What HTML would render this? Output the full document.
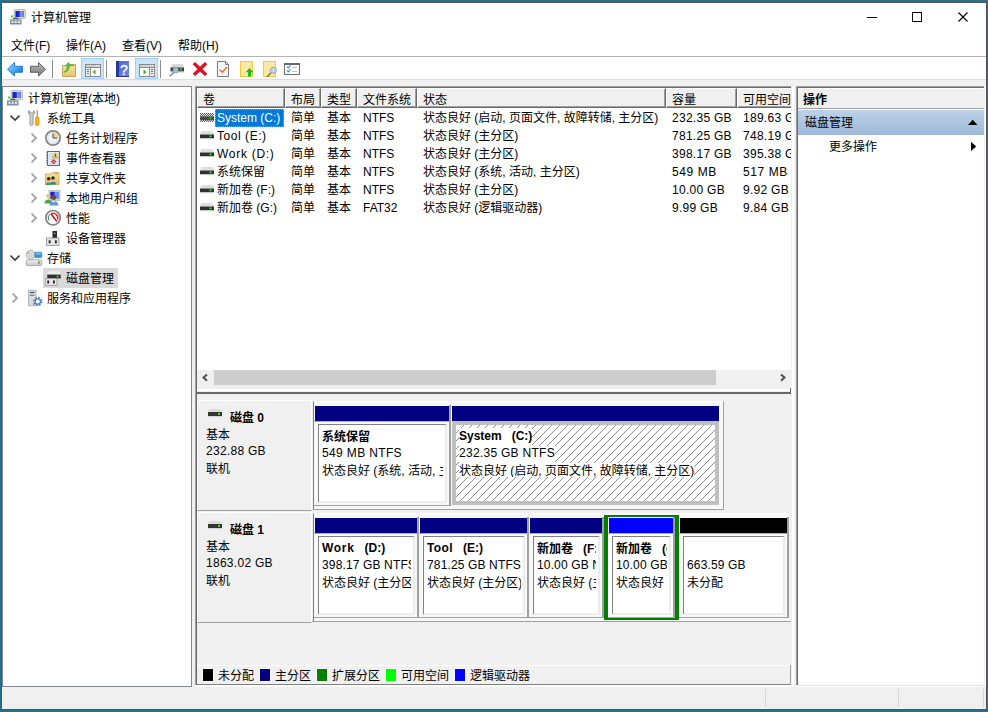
<!DOCTYPE html>
<html lang="zh-CN">
<head>
<meta charset="utf-8">
<title>计算机管理</title>
<style>
*{box-sizing:border-box;margin:0;padding:0}
html,body{width:988px;height:712px;overflow:hidden}
body{position:relative;background:#26708c;font-family:"Liberation Sans","Noto Sans CJK SC",sans-serif;font-size:12px;color:#000;line-height:16px}
.a{position:absolute}
.t{position:absolute;white-space:nowrap;height:16px;line-height:16px}
.b{font-weight:bold}
#frame{left:1px;top:2px;width:986px;height:708px;background:#50555a}
#win{left:2px;top:3px;width:984px;height:706px;background:#f0f0f0}
#top{left:2px;top:3px;width:984px;height:76px;background:#fff}
#tbline{left:2px;top:56px;width:984px;height:1px;background:#b4b4b4}
/* panes */
#left{left:2px;top:86px;width:190px;height:601px;background:#fff;border:1px solid #828790}
#mid{left:195px;top:86px;width:599px;height:601px;background:#f0f0f0;border-left:1px solid #a0a0a0;border-top:1px solid #a0a0a0}
#midin{left:196px;top:87px;width:597px;height:599px;border-left:1px solid #696969;border-top:1px solid #696969;background:#f0f0f0}
#right{left:796px;top:86px;width:190px;height:601px;background:#fff;border-left:1px solid #a0a0a0;border-top:1px solid #a0a0a0}
#rightin{left:797px;top:87px;width:189px;height:600px;background:#fff;border-left:1px solid #696969;border-top:1px solid #696969}
#status{left:2px;top:687px;width:984px;height:22px;background:#f0f0f0}
.hd{background:#f0f0f0;border-top:1px solid #fff;border-left:1px solid #fff;border-right:1px solid #696969;border-bottom:1px solid #696969;box-shadow:inset -1px -1px 0 #a0a0a0}
.l{letter-spacing:.55px}
.lab{background:#f0f0f0;border-top:1px solid #fff;border-left:1px solid #fff;border-right:1px solid #fff;border-bottom:1px solid #a0a0a0}
.pb{background:#fff;border-top:1px solid #808080;border-left:1px solid #808080;border-right:2px solid #ececec;border-bottom:2px solid #ececec}
.hat{border:4px solid #c0c0c0;background:#fff repeating-linear-gradient(135deg,transparent 0,transparent 4.95px,#8a8a8a 4.95px,#8a8a8a 5.657px)}
.g{display:inline-block;width:10px}
.l2{letter-spacing:.28px}
.l3{letter-spacing:.14px}
</style>
</head>
<body>
<div id="frame" class="a"></div>
<div id="win" class="a"></div>
<div id="top" class="a"></div>
<div id="tbline" class="a"></div>
<div class="a" style="left:3px;top:79px;width:983px;height:1px;background:#dcdcdc"></div>
<!-- TITLE -->
<div class="t" style="left:31px;top:10px">计算机管理</div>
<!-- TITLE ICON -->
<svg class="a" style="left:8px;top:7px" width="20" height="20" viewBox="5 88 20 20"><defs><linearGradient id="scr2" x1="0" y1="0" x2="1" y2="0"><stop offset="0" stop-color="#0a14c8"/><stop offset=".45" stop-color="#2030e0"/><stop offset=".55" stop-color="#8098ff"/><stop offset="1" stop-color="#5a78f0"/></linearGradient></defs>
<rect x="11" y="90.5" width="11.5" height="9" rx="1" fill="#dcdccc" stroke="#b4b4a4" stroke-width=".8"/>
<rect x="12.5" y="92" width="8.5" height="6" fill="url(#scr2)"/>
<rect x="8" y="96.5" width="2" height="2" fill="#40d040"/>
<path d="M10 100.5C11 98.5 14 98.5 15.5 100.5" fill="none" stroke="#303030" stroke-width="1.2"/>
<rect x="7" y="100" width="11.5" height="5.5" fill="#7f909c"/>
<rect x="7" y="100" width="11.5" height="1.5" fill="#a8b4bc"/>
<rect x="8.5" y="102" width="2" height="2" fill="#e8ecf0"/><rect x="11.7" y="102" width="2" height="2" fill="#e8ecf0"/><rect x="15" y="102" width="2" height="2" fill="#e8ecf0"/>
</svg>
<!-- WINDOW CONTROLS -->
<svg class="a" style="left:860px;top:6px" width="120" height="24" viewBox="0 0 120 24">
<path d="M7 11.5H17" stroke="#000" stroke-width="1" fill="none"/>
<rect x="52.5" y="6.5" width="9" height="9" stroke="#000" stroke-width="1" fill="none"/>
<path d="M98.5 6.5L107.5 15.5M107.5 6.5L98.5 15.5" stroke="#000" stroke-width="1.1" fill="none"/>
</svg>
<!-- MENU -->
<div class="t" style="left:11px;top:38px">文件(F)</div>
<div class="t" style="left:66px;top:38px">操作(A)</div>
<div class="t" style="left:122px;top:38px">查看(V)</div>
<div class="t" style="left:178px;top:38px">帮助(H)</div>
<!--TOOLBAR-->
<svg class="a" style="left:2px;top:57px" width="310" height="23" viewBox="2 57 310 23">
<defs>
<linearGradient id="gb" x1="0" y1="0" x2="1" y2="1"><stop offset="0" stop-color="#9adcff"/><stop offset=".45" stop-color="#4ab0f8"/><stop offset="1" stop-color="#0a5ccc"/></linearGradient>
<linearGradient id="gg" x1="0" y1="0" x2="0" y2="1"><stop offset="0" stop-color="#b8b8b8"/><stop offset="1" stop-color="#7c7c7c"/></linearGradient>
<linearGradient id="gh" x1="0" y1="0" x2="1" y2="1"><stop offset="0" stop-color="#4a66cc"/><stop offset="1" stop-color="#6f8ae0"/></linearGradient>
<linearGradient id="gf" x1="0" y1="0" x2="0" y2="1"><stop offset="0" stop-color="#f8e4a8"/><stop offset="1" stop-color="#e8c46c"/></linearGradient>
</defs>
<!-- back -->
<path d="M7.5 69.3L14.5 62.5V66.3H22.5V72.3H14.5V76.1Z" fill="url(#gb)" stroke="#2a7fd0" stroke-width="1" stroke-linejoin="round"/>
<!-- forward -->
<path d="M45.5 69.3L38.5 62.5V66.3H30.5V72.3H38.5V76.1Z" fill="url(#gg)" stroke="#606060" stroke-width="1" stroke-linejoin="round"/>
<rect x="52" y="60" width="1" height="18" fill="#8d8d8d"/>
<!-- folder up -->
<path d="M62.5 65.5H67.5L68.5 64.5H75.5V76.5H62.5Z" fill="url(#gf)" stroke="#c9a455" stroke-width="1"/>
<rect x="71" y="65" width="3" height="1" fill="#5a8fe0"/>
<path d="M63.8 72.3C66.3 71 67.2 68.8 67.2 66H65.6L68.3 62.3L71 66H69.4C69.2 69.6 67 72 63.8 72.3Z" fill="#44cc44" stroke="#2a9a2a" stroke-width=".5"/>
<!-- btn1 -->
<rect x="81.5" y="58.5" width="22" height="20" fill="#cce4f7" stroke="#99d1ff"/>
<rect x="85.5" y="64.5" width="15" height="12" fill="#fff" stroke="#8a8a8a"/>
<rect x="86" y="65" width="14" height="2" fill="#d0d0d0"/><rect x="86" y="67" width="14" height="1" fill="#8a8a8a"/>
<rect x="96" y="65" width="1" height="1" fill="#fff"/><rect x="98" y="65" width="1" height="1" fill="#fff"/>
<rect x="86" y="68" width="4" height="8" fill="#f0f0f0"/><rect x="90" y="68" width="1" height="8" fill="#8a8a8a"/>
<rect x="87" y="69" width="2" height="1" fill="#3a78d0"/><rect x="87" y="71" width="2" height="1" fill="#3a78d0"/><rect x="87" y="73" width="2" height="1" fill="#3a78d0"/>
<path d="M95.5 69.5V74.5L92.5 72Z" fill="#2eb82e"/>
<rect x="106" y="60" width="1" height="18" fill="#8d8d8d"/>
<!-- help -->
<rect x="116" y="61" width="13" height="16" fill="url(#gh)"/><rect x="116" y="61" width="3" height="16" fill="#25389c"/>
<rect x="116" y="76" width="13" height="1" fill="#25389c"/>
<text x="124" y="74.6" font-family="Liberation Sans, sans-serif" font-size="14" fill="#fff" stroke="#fff" stroke-width=".3" text-anchor="middle">?</text>
<!-- btn2 -->
<rect x="135.5" y="58.5" width="22" height="20" fill="#cce4f7" stroke="#99d1ff"/>
<rect x="139.5" y="64.5" width="15" height="12" fill="#fff" stroke="#8a8a8a"/>
<rect x="140" y="65" width="14" height="2" fill="#d0d0d0"/><rect x="140" y="67" width="14" height="1" fill="#8a8a8a"/>
<rect x="150" y="65" width="1" height="1" fill="#fff"/><rect x="152" y="65" width="1" height="1" fill="#fff"/>
<rect x="150" y="68" width="4" height="8" fill="#f0f0f0"/><rect x="149" y="68" width="1" height="8" fill="#8a8a8a"/>
<rect x="151" y="69" width="2" height="1" fill="#3a78d0"/><rect x="151" y="71" width="2" height="1" fill="#3a78d0"/><rect x="151" y="73" width="2" height="1" fill="#3a78d0"/>
<path d="M143.5 69.5V74.5L146.5 72Z" fill="#2eb82e"/>
<rect x="160" y="60" width="1" height="18" fill="#8d8d8d"/>
<!-- properties: drive + magnifier -->
<path d="M172 64H182.5L184 67.5H170.5Z" fill="#d8d8d8"/>
<rect x="170.5" y="67.5" width="13.5" height="4" fill="#3a3a3a"/>
<rect x="170.5" y="71.5" width="13.5" height="1" fill="#c8c8c8"/>
<rect x="180" y="68.5" width="2" height="2" fill="#30e030"/>
<path d="M174 72.6L169.5 76.3" stroke="#6a7a8a" stroke-width="1.3"/>
<circle cx="175.7" cy="70" r="2.8" fill="#a8c8e6" fill-opacity=".9" stroke="#7f8c99" stroke-width=".9"/>
<!-- red X -->
<path d="M195 62.3L200 67L205 62.3L207 64.3L202.2 69L207 73.7L205 75.8L200 71.2L195 75.8L193 73.7L197.8 69L193 64.3Z" fill="#e01020" stroke="#b00010" stroke-width=".5"/>
<!-- doc check -->
<path d="M217.5 61.5H225.5L228.5 64.5V76.5H217.5Z" fill="#f6f6f6" stroke="#7a7a7a"/>
<path d="M225.5 61.5V64.5H228.5" fill="none" stroke="#7a7a7a"/>
<path d="M219.7 69.8L222.3 72.3L227 67" fill="none" stroke="#f26522" stroke-width="1.4"/>
<!-- yellow doc up -->
<rect x="240.5" y="61.5" width="12" height="15" fill="#fde9a2" stroke="#f0c64c"/>
<path d="M249.5 68L253.3 72.2H251V76.5H248V72.2H245.7Z" fill="#18c018"/>
<!-- yellow doc find -->
<rect x="263.5" y="61.5" width="12" height="15" fill="#fde9a2" stroke="#f0c64c"/>
<path d="M271.2 72.8L267 76.8" stroke="#5a6a7a" stroke-width="1.3"/>
<circle cx="273.4" cy="70.3" r="3" fill="#c4dcf0" stroke="#8a9aaa" stroke-width=".9"/>
<!-- checklist -->
<rect x="284.5" y="64" width="15" height="10.5" fill="#fff" stroke="#6a6a6a"/>
<rect x="284" y="63" width="16" height="2" fill="#6a6a6a"/>
<path d="M287 66.3L288.3 67.8L290.5 65.3M287 70.3L288.3 71.8L290.5 69.3" fill="none" stroke="#2a8ae8" stroke-width="1.1"/>
<rect x="292" y="67" width="5" height="1" fill="#c0c0c0"/><rect x="292" y="71" width="5" height="1" fill="#c0c0c0"/>
</svg>
<!-- PANES -->
<div id="left" class="a"></div>
<div id="mid" class="a"></div>
<div id="midin" class="a"></div>
<div id="right" class="a"></div>
<div id="rightin" class="a"></div>
<div id="status" class="a"></div>
<div class="a" style="left:765px;top:689px;width:1px;height:18px;background:#d4d4d4"></div><div class="a" style="left:898px;top:689px;width:1px;height:18px;background:#d4d4d4"></div><div class="a" style="left:983px;top:689px;width:1px;height:18px;background:#d4d4d4"></div>
<!--TREE-->
<div class="a" style="left:43px;top:268px;width:75px;height:20px;background:#d9d9d9"></div>
<div class="t" style="left:28px;top:91px">计算机管理(本地)</div>
<svg class="a" style="left:9.5px;top:113px" width="10" height="10"><path d="M0.5 2.5L5 7L9.5 2.5" stroke="#404040" stroke-width="1.7" fill="none"/></svg>
<div class="t" style="left:47px;top:111px">系统工具</div>
<svg class="a" style="left:29px;top:133px" width="10" height="10"><path d="M2.5 0.5L7 5L2.5 9.5" stroke="#a6a6a6" stroke-width="1.8" fill="none"/></svg>
<div class="t" style="left:66px;top:131px">任务计划程序</div>
<svg class="a" style="left:29px;top:153px" width="10" height="10"><path d="M2.5 0.5L7 5L2.5 9.5" stroke="#a6a6a6" stroke-width="1.8" fill="none"/></svg>
<div class="t" style="left:66px;top:151px">事件查看器</div>
<svg class="a" style="left:29px;top:173px" width="10" height="10"><path d="M2.5 0.5L7 5L2.5 9.5" stroke="#a6a6a6" stroke-width="1.8" fill="none"/></svg>
<div class="t" style="left:66px;top:171px">共享文件夹</div>
<svg class="a" style="left:29px;top:193px" width="10" height="10"><path d="M2.5 0.5L7 5L2.5 9.5" stroke="#a6a6a6" stroke-width="1.8" fill="none"/></svg>
<div class="t" style="left:66px;top:191px">本地用户和组</div>
<svg class="a" style="left:29px;top:213px" width="10" height="10"><path d="M2.5 0.5L7 5L2.5 9.5" stroke="#a6a6a6" stroke-width="1.8" fill="none"/></svg>
<div class="t" style="left:66px;top:211px">性能</div>
<div class="t" style="left:66px;top:231px">设备管理器</div>
<svg class="a" style="left:9.5px;top:253px" width="10" height="10"><path d="M0.5 2.5L5 7L9.5 2.5" stroke="#404040" stroke-width="1.7" fill="none"/></svg>
<div class="t" style="left:47px;top:251px">存储</div>
<div class="t" style="left:66px;top:271px">磁盘管理</div>
<svg class="a" style="left:10px;top:293px" width="10" height="10"><path d="M2.5 0.5L7 5L2.5 9.5" stroke="#a6a6a6" stroke-width="1.8" fill="none"/></svg>
<div class="t" style="left:47px;top:291px">服务和应用程序</div>
<svg class="a" style="left:3px;top:88px" width="80" height="224" viewBox="3 88 80 224">
<defs>
<linearGradient id="scr" x1="0" y1="0" x2="1" y2="0"><stop offset="0" stop-color="#0a14c8"/><stop offset=".45" stop-color="#2030e0"/><stop offset=".55" stop-color="#8098ff"/><stop offset="1" stop-color="#5a78f0"/></linearGradient>
<linearGradient id="fld" x1="0" y1="0" x2="0" y2="1"><stop offset="0" stop-color="#f8e4a8"/><stop offset="1" stop-color="#e4bc64"/></linearGradient>
<linearGradient id="drv" x1="0" y1="0" x2="0" y2="1"><stop offset="0" stop-color="#f4f4f8"/><stop offset="1" stop-color="#c4c4cc"/></linearGradient>
<radialGradient id="clk"><stop offset="0" stop-color="#fff"/><stop offset="1" stop-color="#d8e4f0"/></radialGradient>
</defs>
<!-- computer management -->
<g>
<rect x="11" y="90.5" width="11.5" height="9" rx="1" fill="#dcdccc" stroke="#b4b4a4" stroke-width=".8"/>
<rect x="12.5" y="92" width="8.5" height="6" fill="url(#scr)"/>
<rect x="8" y="96.5" width="2" height="2" fill="#40d040"/>
<path d="M10 100.5C11 98.5 14 98.5 15.5 100.5" fill="none" stroke="#303030" stroke-width="1.2"/>
<rect x="7" y="100" width="11.5" height="5.5" fill="#7f909c"/>
<rect x="7" y="100" width="11.5" height="1.5" fill="#a8b4bc"/>
<rect x="8.5" y="102" width="2" height="2" fill="#e8ecf0"/><rect x="11.7" y="102" width="2" height="2" fill="#e8ecf0"/><rect x="15" y="102" width="2" height="2" fill="#e8ecf0"/>
</g>
<!-- system tools: wrench + screwdriver -->
<path d="M29.2 110.5C28 112 28.3 114 30 115V124.3C30 125.8 33 125.8 33 124.3V115C34.7 114 35 112 33.8 110.5L33 113H30Z" fill="#d4d4d4" stroke="#808080" stroke-width=".8"/>
<rect x="36.6" y="110" width="1.2" height="8" fill="#909090"/>
<rect x="35.3" y="117.3" width="3.8" height="8.2" rx="1.2" fill="#f2b414" stroke="#c88a08" stroke-width=".6"/>
<!-- task scheduler clock -->
<circle cx="53" cy="138" r="7.2" fill="url(#clk)" stroke="#858585" stroke-width="1.7"/>
<path d="M53 138V132A6 6 0 0 1 59 138Z" fill="#f4d890"/>
<path d="M53 133.5V138H57" fill="none" stroke="#404040" stroke-width="1"/>
<!-- event viewer -->
<rect x="47.5" y="151.5" width="12" height="14" fill="#e4ecf8" stroke="#5068b0" stroke-width="1"/>
<path d="M49 154H59M49 156.5H59M49 159H59M49 161.5H59M49 164H59" stroke="#a8b8d8" stroke-width=".6"/>
<path d="M46 153H48M46 155.5H48M46 158H48M46 160.5H48M46 163H48" stroke="#707070" stroke-width=".9"/>
<path d="M55.3 152.8L58.3 158H52.3Z" fill="#f8d020" stroke="#c09000" stroke-width=".5"/>
<rect x="55" y="154.5" width=".8" height="2" fill="#000"/>
<circle cx="53.6" cy="161.6" r="2.2" fill="#e02020"/>
<path d="M52.6 160.6L54.6 162.6M54.6 160.6L52.6 162.6" stroke="#fff" stroke-width=".7"/>
<!-- shared folders -->
<path d="M45.5 174H51L52.3 172.5H59V184.5H45.5Z" fill="url(#fld)" stroke="#c9a455" stroke-width=".8"/>
<rect x="55" y="173.2" width="2.5" height="1" fill="#5a8fe0"/>
<circle cx="48.7" cy="178.7" r="1.8" fill="#3a2c20"/><path d="M45.5 185C45.5 181.5 51.8 181.5 51.8 185Z" fill="#30a060"/>
<circle cx="53" cy="178" r="1.8" fill="#3a2c20"/><path d="M50 184.5C50 180.8 56.2 180.8 56.2 184.5Z" fill="#2a80c0"/>
<!-- local users and groups -->
<rect x="49" y="190.5" width="11" height="10" fill="#d8d8d0" stroke="#a8a8a0" stroke-width=".6"/>
<rect x="50.3" y="191.8" width="8.5" height="7" fill="url(#scr)"/>
<circle cx="48.3" cy="196" r="2.3" fill="#e8c888"/><path d="M44.5 203.5C44.5 198 52 198 52 203.5Z" fill="#58a048"/>
<circle cx="53.7" cy="197.6" r="2.5" fill="#7a4a28"/><path d="M49.5 205.5C49.5 199.5 58.5 199.5 58.5 205.5Z" fill="#5a98d8"/>
<path d="M52.5 201L53.7 203L55 201Z" fill="#fff"/>
<!-- performance -->
<circle cx="53" cy="217.7" r="7.2" fill="#fafafa" stroke="#858585" stroke-width="1.7"/>
<path d="M49 220.5A5 5 0 0 1 50 214" fill="none" stroke="#408060" stroke-width="1"/>
<path d="M51 213.5A5 5 0 0 1 57.6 219.5" fill="none" stroke="#e01020" stroke-width="1.3"/>
<path d="M51 213.8L56.8 221.5" stroke="#e01020" stroke-width="1.6"/>
<!-- device manager -->
<rect x="52.5" y="231" width="4.5" height="8" fill="#282828"/><rect x="54" y="232.7" width="1.5" height="1.5" fill="#40e040"/>
<rect x="46.5" y="238" width="12.5" height="7.5" fill="#e4e4e4" stroke="#909090" stroke-width=".8"/>
<rect x="48.7" y="240.3" width="1.8" height="3" fill="#202020"/><rect x="55" y="240.3" width="1.8" height="3" fill="#202020"/>
<!-- storage -->
<circle cx="30.7" cy="254.8" r="4.6" fill="#dcdcdc" stroke="#a0a0a0" stroke-width=".7"/><circle cx="30.7" cy="254.8" r="1.2" fill="#fff" stroke="#a0a0a0" stroke-width=".5"/>
<rect x="27.5" y="252.2" width="1.4" height="1.4" fill="#50c050"/>
<rect x="34.8" y="252.2" width="7" height="5.4" rx="1" fill="#3a98d0" stroke="#2a70a8" stroke-width=".6"/>
<rect x="35.5" y="252.8" width="5.6" height="1.6" fill="#78c4ec"/>
<rect x="26.3" y="259.8" width="15.4" height="5.8" rx="1.3" fill="url(#drv)" stroke="#9a9aa4" stroke-width=".8"/>
<rect x="38" y="261" width="1.6" height="3.2" fill="#40c040"/>
<!-- disk management -->
<path d="M48.8 271H59.2L60.7 274.6H47.3Z" fill="#ececec"/>
<rect x="47.3" y="274.6" width="13.4" height="3.8" fill="#303030"/>
<rect x="56.7" y="275.6" width="1.8" height="1.8" fill="#40e040"/>
<rect x="45.3" y="278.4" width="11.7" height="7.2" fill="#e4e4e4" stroke="#909090" stroke-width=".7"/>
<rect x="47.3" y="280.5" width="1.8" height="3" fill="#202020"/><rect x="53" y="280.5" width="1.8" height="3" fill="#202020"/>
<!-- services and applications -->
<rect x="28.3" y="290.3" width="7.7" height="15.5" fill="#d8dce0" stroke="#98a0a8" stroke-width=".7"/>
<rect x="29.8" y="292" width="4.6" height="1.1" fill="#404850"/><rect x="29.8" y="294.8" width="4.6" height="1.1" fill="#707880"/>
<rect x="33" y="303.5" width="1.6" height="1.3" fill="#40c040"/>
<circle cx="37.8" cy="301.5" r="3.6" fill="#fff" stroke="#4a80d0" stroke-width="2.2" stroke-dasharray="1.6 1.2"/>
<circle cx="37.8" cy="301.5" r="2.6" fill="#fff" stroke="#4a80d0" stroke-width="1.2"/>
</svg>
<!--LIST-->
<div class="a" style="left:197px;top:88px;width:595px;height:301px;background:#fff"></div>
<div class="a" style="left:197px;top:88px;width:595px;height:20px;background:#f0f0f0"></div>
<div class="a hd" style="left:197px;top:88px;width:88px;height:20px"></div>
<div class="a hd" style="left:285px;top:88px;width:36px;height:20px"></div>
<div class="a hd" style="left:321px;top:88px;width:36px;height:20px"></div>
<div class="a hd" style="left:357px;top:88px;width:60px;height:20px"></div>
<div class="a hd" style="left:417px;top:88px;width:249px;height:20px"></div>
<div class="a hd" style="left:666px;top:88px;width:71px;height:20px"></div>
<div class="a hd" style="left:737px;top:88px;width:58px;height:20px"></div>
<div class="t" style="left:203px;top:92px">卷</div>
<div class="t" style="left:291px;top:92px">布局</div>
<div class="t" style="left:327px;top:92px">类型</div>
<div class="t" style="left:363px;top:92px">文件系统</div>
<div class="t" style="left:423px;top:92px">状态</div>
<div class="t" style="left:672px;top:92px">容量</div>
<div class="t" style="left:743px;top:92px">可用空间</div>
<div class="a" style="left:215px;top:109px;width:69px;height:18px;background:#0078d7;border:1px dotted #ff8a2a"></div>
<svg class="a" style="left:200px;top:113px" width="14" height="9" viewBox="0 0 14 9"><defs><pattern id="chk" width="2" height="2" patternUnits="userSpaceOnUse"><rect x="0" y="0" width="1" height="1" fill="#0078d7"/><rect x="1" y="1" width="1" height="1" fill="#0078d7"/></pattern></defs><path d="M1.5 0H12.5L14 3.5H0Z" fill="#dedede"/><rect x="0" y="3.5" width="14" height="3.7" fill="#303030"/><rect x="0" y="7.2" width="14" height=".9" fill="#c4c4c4"/><rect x="9.5" y="4.5" width="2" height="1.7" fill="#34e034"/><rect x="0" y="0" width="14" height="9" fill="url(#chk)"/></svg>
<div class="t" style="left:217px;top:110px;color:#fff">System (C:)</div>
<div class="t" style="left:291px;top:110px">简单</div>
<div class="t" style="left:327px;top:110px">基本</div>
<div class="t" style="left:363px;top:110px">NTFS</div>
<div class="t" style="left:423px;top:110px">状态良好 (启动, 页面文件, 故障转储, 主分区)</div>
<div class="t l2" style="left:672px;top:110px">232.35 GB</div>
<div class="t l2" style="left:743px;top:110px">189.63 G</div>
<svg class="a" style="left:200px;top:131px" width="14" height="9" viewBox="0 0 14 9"><path d="M1.5 0H12.5L14 3.5H0Z" fill="#dedede"/><rect x="0" y="3.5" width="14" height="3.7" fill="#303030"/><rect x="0" y="7.2" width="14" height=".9" fill="#c4c4c4"/><rect x="9.5" y="4.5" width="2" height="1.7" fill="#34e034"/></svg>
<div class="t" style="left:217px;top:128px"><span class="l">Tool (E:)</span></div>
<div class="t" style="left:291px;top:128px">简单</div>
<div class="t" style="left:327px;top:128px">基本</div>
<div class="t" style="left:363px;top:128px">NTFS</div>
<div class="t" style="left:423px;top:128px">状态良好 (主分区)</div>
<div class="t l2" style="left:672px;top:128px">781.25 GB</div>
<div class="t l2" style="left:743px;top:128px">748.19 G</div>
<svg class="a" style="left:200px;top:149px" width="14" height="9" viewBox="0 0 14 9"><path d="M1.5 0H12.5L14 3.5H0Z" fill="#dedede"/><rect x="0" y="3.5" width="14" height="3.7" fill="#303030"/><rect x="0" y="7.2" width="14" height=".9" fill="#c4c4c4"/><rect x="9.5" y="4.5" width="2" height="1.7" fill="#34e034"/></svg>
<div class="t" style="left:217px;top:146px"><span style="letter-spacing:.72px">Work (D:)</span></div>
<div class="t" style="left:291px;top:146px">简单</div>
<div class="t" style="left:327px;top:146px">基本</div>
<div class="t" style="left:363px;top:146px">NTFS</div>
<div class="t" style="left:423px;top:146px">状态良好 (主分区)</div>
<div class="t l2" style="left:672px;top:146px">398.17 GB</div>
<div class="t l2" style="left:743px;top:146px">395.38 G</div>
<svg class="a" style="left:200px;top:167px" width="14" height="9" viewBox="0 0 14 9"><path d="M1.5 0H12.5L14 3.5H0Z" fill="#dedede"/><rect x="0" y="3.5" width="14" height="3.7" fill="#303030"/><rect x="0" y="7.2" width="14" height=".9" fill="#c4c4c4"/><rect x="9.5" y="4.5" width="2" height="1.7" fill="#34e034"/></svg>
<div class="t" style="left:217px;top:164px">系统保留</div>
<div class="t" style="left:291px;top:164px">简单</div>
<div class="t" style="left:327px;top:164px">基本</div>
<div class="t" style="left:363px;top:164px">NTFS</div>
<div class="t" style="left:423px;top:164px">状态良好 (系统, 活动, 主分区)</div>
<div class="t l2" style="left:672px;top:164px;letter-spacing:.6px">549 MB</div>
<div class="t l2" style="left:743px;top:164px;letter-spacing:.6px">517 MB</div>
<svg class="a" style="left:200px;top:185px" width="14" height="9" viewBox="0 0 14 9"><path d="M1.5 0H12.5L14 3.5H0Z" fill="#dedede"/><rect x="0" y="3.5" width="14" height="3.7" fill="#303030"/><rect x="0" y="7.2" width="14" height=".9" fill="#c4c4c4"/><rect x="9.5" y="4.5" width="2" height="1.7" fill="#34e034"/></svg>
<div class="t" style="left:217px;top:182px">新加卷 (F:)</div>
<div class="t" style="left:291px;top:182px">简单</div>
<div class="t" style="left:327px;top:182px">基本</div>
<div class="t" style="left:363px;top:182px">NTFS</div>
<div class="t" style="left:423px;top:182px">状态良好 (主分区)</div>
<div class="t l2" style="left:672px;top:182px">10.00 GB</div>
<div class="t l2" style="left:743px;top:182px">9.92 GB</div>
<svg class="a" style="left:200px;top:203px" width="14" height="9" viewBox="0 0 14 9"><path d="M1.5 0H12.5L14 3.5H0Z" fill="#dedede"/><rect x="0" y="3.5" width="14" height="3.7" fill="#303030"/><rect x="0" y="7.2" width="14" height=".9" fill="#c4c4c4"/><rect x="9.5" y="4.5" width="2" height="1.7" fill="#34e034"/></svg>
<div class="t" style="left:217px;top:200px">新加卷 (G:)</div>
<div class="t" style="left:291px;top:200px">简单</div>
<div class="t" style="left:327px;top:200px">基本</div>
<div class="t" style="left:363px;top:200px">FAT32</div>
<div class="t" style="left:423px;top:200px">状态良好 (逻辑驱动器)</div>
<div class="t l2" style="left:672px;top:200px">9.99 GB</div>
<div class="t l2" style="left:743px;top:200px">9.84 GB</div>
<div class="a" style="left:791px;top:86px;width:5px;height:601px;background:#f0f0f0"></div><div class="a" style="left:792px;top:86px;width:2px;height:601px;background:#fff"></div>
<div class="a" style="left:197px;top:370px;width:595px;height:17px;background:#f0f0f0"></div>
<div class="a" style="left:214px;top:370px;width:502px;height:15px;background:#cdcdcd"></div>
<svg class="a" style="left:200px;top:372px" width="12" height="12"><path d="M7 2.5L3.5 5.6L7 8.7" stroke="#505050" stroke-width="2" fill="none"/></svg>
<svg class="a" style="left:776px;top:372px" width="12" height="12"><path d="M5 2.5L8.5 5.6L5 8.7" stroke="#505050" stroke-width="2" fill="none"/></svg>
<div class="a" style="left:197px;top:387px;width:595px;height:5px;background:#f0f0f0"></div>
<div class="a" style="left:197px;top:389px;width:595px;height:2px;background:#fff"></div>
<div class="a" style="left:197px;top:392px;width:594px;height:2px;background:#696969"></div><div class="a" style="left:790px;top:388px;width:1px;height:5px;background:#696969"></div>
<!--DISKS-->
<div class="a" style="left:197px;top:621px;width:594px;height:1px;background:#a0a0a0"></div>
<div class="a lab" style="left:197px;top:400px;width:115px;height:111px"></div>
<svg class="a" style="left:207px;top:408px" width="16" height="10" viewBox="0 0 16 10"><path d="M2.5 1H13.5L15 4H1Z" fill="#dcdcdc"/><rect x="1" y="4" width="14" height="4" fill="#333"/><rect x="1" y="8" width="14" height=".8" fill="#d0d0d0"/><rect x="11" y="5" width="2" height="2" fill="#38e038"/></svg>
<div class="t b" style="left:230px;top:410px">磁盘 0</div>
<div class="t" style="left:206px;top:427px">基本</div>
<div class="t l2" style="left:206px;top:443px">232.88 GB</div>
<div class="t" style="left:206px;top:461px">联机</div>
<div class="a" style="left:313px;top:401px;width:411px;height:109px;background:#f8f8f8;border-left:1px solid #808080;border-right:1px solid #a0a0a0;border-bottom:1px solid #a0a0a0;border-top:1px solid #fff"></div>
<div class="a" style="left:449px;top:405px;width:2px;height:101px;background:#a0a0a0"></div>
<div class="a" style="left:315px;top:406px;width:134px;height:15px;background:#000080"></div>
<div class="a" style="left:314px;top:421px;width:135px;height:1px;background:#b4b0a8"></div>
<div class="a" style="left:314px;top:505px;width:137px;height:1px;background:#a0a0a0"></div>
<div class="a pb" style="left:318px;top:424px;width:129px;height:79px"></div>
<div class="a" style="left:322px;top:428px;width:121px;height:52px;overflow:hidden">
<div class="t b" style="left:0;top:1px;height:17px">系统保留</div>
<div class="t" style="left:0;top:17px;height:17px;letter-spacing:.36px">549 MB NTFS</div>
<div class="t" style="left:0;top:35px;height:17px">状态良好 (系统, 活动, 主分区)</div>
</div>
<div class="a" style="left:452px;top:406px;width:267px;height:15px;background:#000080"></div>
<div class="a hat" style="left:452px;top:421px;width:267px;height:84px"></div>
<div class="a" style="left:459px;top:428px;width:254px;height:49px;overflow:hidden">
<div class="t b" style="left:0;top:0;height:18px;line-height:16px;background:#fff">System<span class="g"></span>(C:)</div>
<div class="t l2" style="left:0;top:18px;height:17px;line-height:14px;background:#fff">232.35 GB NTFS</div>
<div class="t" style="left:0;top:35px;height:17px;background:#fff">状态良好 (启动, 页面文件, 故障转储, 主分区)</div>
</div>
<div class="a lab" style="left:197px;top:512px;width:115px;height:111px"></div>
<svg class="a" style="left:207px;top:520px" width="16" height="10" viewBox="0 0 16 10"><path d="M2.5 1H13.5L15 4H1Z" fill="#dcdcdc"/><rect x="1" y="4" width="14" height="4" fill="#333"/><rect x="1" y="8" width="14" height=".8" fill="#d0d0d0"/><rect x="11" y="5" width="2" height="2" fill="#38e038"/></svg>
<div class="t b" style="left:230px;top:522px">磁盘 1</div>
<div class="t" style="left:206px;top:539px">基本</div>
<div class="t l2" style="left:206px;top:555px">1863.02 GB</div>
<div class="t" style="left:206px;top:573px">联机</div>
<div class="a" style="left:313px;top:513px;width:476px;height:109px;background:#f8f8f8;border-left:1px solid #808080;border-bottom:1px solid #a0a0a0;border-top:1px solid #fff"></div>
<div class="a" style="left:417px;top:517px;width:2px;height:101px;background:#a0a0a0"></div>
<div class="a" style="left:315px;top:518px;width:102px;height:15px;background:#000080"></div>
<div class="a" style="left:314px;top:533px;width:103px;height:1px;background:#b4b0a8"></div>
<div class="a" style="left:314px;top:617px;width:105px;height:1px;background:#a0a0a0"></div>
<div class="a pb" style="left:318px;top:536px;width:97px;height:79px"></div>
<div class="a" style="left:322px;top:540px;width:89px;height:52px;overflow:hidden">
<div class="t b" style="left:0;top:0;height:17px"><span style="letter-spacing:.7px">Work</span><span class="g"></span>(D:)</div>
<div class="t l3" style="left:0;top:17px;height:17px">398.17 GB NTFS</div>
<div class="t" style="left:0;top:35px;height:17px">状态良好 (主分区)</div>
</div>
<div class="a" style="left:527px;top:517px;width:2px;height:101px;background:#a0a0a0"></div>
<div class="a" style="left:420px;top:518px;width:107px;height:15px;background:#000080"></div>
<div class="a" style="left:419px;top:533px;width:108px;height:1px;background:#b4b0a8"></div>
<div class="a" style="left:419px;top:617px;width:110px;height:1px;background:#a0a0a0"></div>
<div class="a pb" style="left:423px;top:536px;width:102px;height:79px"></div>
<div class="a" style="left:427px;top:540px;width:94px;height:52px;overflow:hidden">
<div class="t b" style="left:0;top:0;height:17px"><span style="letter-spacing:.4px">Tool</span><span class="g"></span>(E:)</div>
<div class="t l3" style="left:0;top:17px;height:17px">781.25 GB NTFS</div>
<div class="t" style="left:0;top:35px;height:17px">状态良好 (主分区)</div>
</div>
<div class="a" style="left:602px;top:517px;width:2px;height:101px;background:#a0a0a0"></div>
<div class="a" style="left:530px;top:518px;width:72px;height:15px;background:#000080"></div>
<div class="a" style="left:529px;top:533px;width:73px;height:1px;background:#b4b0a8"></div>
<div class="a" style="left:529px;top:617px;width:75px;height:1px;background:#a0a0a0"></div>
<div class="a pb" style="left:533px;top:536px;width:67px;height:79px"></div>
<div class="a" style="left:537px;top:540px;width:59px;height:52px;overflow:hidden">
<div class="t b" style="left:0;top:1px;height:17px">新加卷<span class="g"></span>(F:)</div>
<div class="t l3" style="left:0;top:17px;height:17px">10.00 GB NTFS</div>
<div class="t" style="left:0;top:35px;height:17px">状态良好 (主分区)</div>
</div>
<div class="a" style="left:604px;top:515px;width:75px;height:105px;border:solid #008000;border-width:2px 4px 2px 4px;background:#fff"></div>
<div class="a" style="left:673px;top:517px;width:2px;height:101px;background:#a0a0a0"></div>
<div class="a" style="left:609px;top:518px;width:64px;height:15px;background:#0000ff"></div>
<div class="a" style="left:608px;top:533px;width:65px;height:1px;background:#b4b0a8"></div>
<div class="a" style="left:608px;top:617px;width:67px;height:1px;background:#a0a0a0"></div>
<div class="a pb" style="left:612px;top:536px;width:59px;height:79px"></div>
<div class="a" style="left:616px;top:540px;width:51px;height:52px;overflow:hidden">
<div class="t b" style="left:0;top:1px;height:17px">新加卷<span class="g"></span>(G:)</div>
<div class="t l3" style="left:0;top:17px;height:17px">10.00 GB FAT32</div>
<div class="t" style="left:0;top:35px;height:17px">状态良好 (逻辑驱动器)</div>
</div>
<div class="a" style="left:787px;top:517px;width:2px;height:101px;background:#a0a0a0"></div>
<div class="a" style="left:680px;top:518px;width:107px;height:15px;background:#000000"></div>
<div class="a" style="left:679px;top:533px;width:108px;height:1px;background:#b4b0a8"></div>
<div class="a" style="left:679px;top:617px;width:110px;height:1px;background:#a0a0a0"></div>
<div class="a pb" style="left:683px;top:536px;width:102px;height:79px"></div>
<div class="a" style="left:687px;top:540px;width:94px;height:52px;overflow:hidden">
<div class="t l3" style="left:0;top:17px;height:17px">663.59 GB</div>
<div class="t" style="left:0;top:35px;height:17px">未分配</div>
</div>
<div class="a" style="left:197px;top:665px;width:594px;height:1px;background:#fff"></div>
<div class="a" style="left:203px;top:669px;width:10px;height:12px;background:#000;box-shadow:0 0 0 1px #fafafa"></div>
<div class="t" style="left:218px;top:668px">未分配</div>
<div class="a" style="left:260px;top:669px;width:10px;height:12px;background:#000080;box-shadow:0 0 0 1px #fafafa"></div>
<div class="t" style="left:275px;top:668px">主分区</div>
<div class="a" style="left:317px;top:669px;width:10px;height:12px;background:#008000;box-shadow:0 0 0 1px #fafafa"></div>
<div class="t" style="left:332px;top:668px">扩展分区</div>
<div class="a" style="left:386px;top:669px;width:10px;height:12px;background:#00ff00;box-shadow:0 0 0 1px #fafafa"></div>
<div class="t" style="left:401px;top:668px">可用空间</div>
<div class="a" style="left:455px;top:669px;width:10px;height:12px;background:#0000ff;box-shadow:0 0 0 1px #fafafa"></div>
<div class="t" style="left:470px;top:668px">逻辑驱动器</div>
<div class="a" style="left:197px;top:684px;width:594px;height:1px;background:#808080"></div><div class="a" style="left:790px;top:665px;width:1px;height:20px;background:#a0a0a0"></div><div class="a" style="left:195px;top:685px;width:599px;height:2px;background:#fff"></div>
<!--ACTIONS-->
<div class="a" style="left:796px;top:685px;width:190px;height:1px;background:#e3e3e3"></div><div class="a" style="left:796px;top:686px;width:190px;height:1px;background:#fff"></div>
<div class="a" style="left:984px;top:86px;width:2px;height:601px;background:#f0f0f0"></div><div class="a" style="left:985px;top:86px;width:1px;height:601px;background:#fff"></div>
<div class="a" style="left:798px;top:88px;width:186px;height:21px;background:#f0f0f0;border-top:1px solid #fff;border-bottom:1px solid #a0a0a0"></div>
<div class="t b" style="left:803px;top:92px">操作</div>
<div class="a" style="left:798px;top:110px;width:186px;height:25px;background:linear-gradient(#bdd3ea,#9db7d6)"></div>
<div class="t" style="left:805px;top:115px">磁盘管理</div>
<div class="t" style="left:829px;top:139px">更多操作</div>
<svg class="a" style="left:967px;top:118px" width="12" height="8"><path d="M1 7L5.7 1.8L10.4 7Z" fill="#000"/></svg>
<svg class="a" style="left:970px;top:140px" width="8" height="13"><path d="M1 1.7L6.2 6.4L1 11.1Z" fill="#000"/></svg>
</body>
</html>
